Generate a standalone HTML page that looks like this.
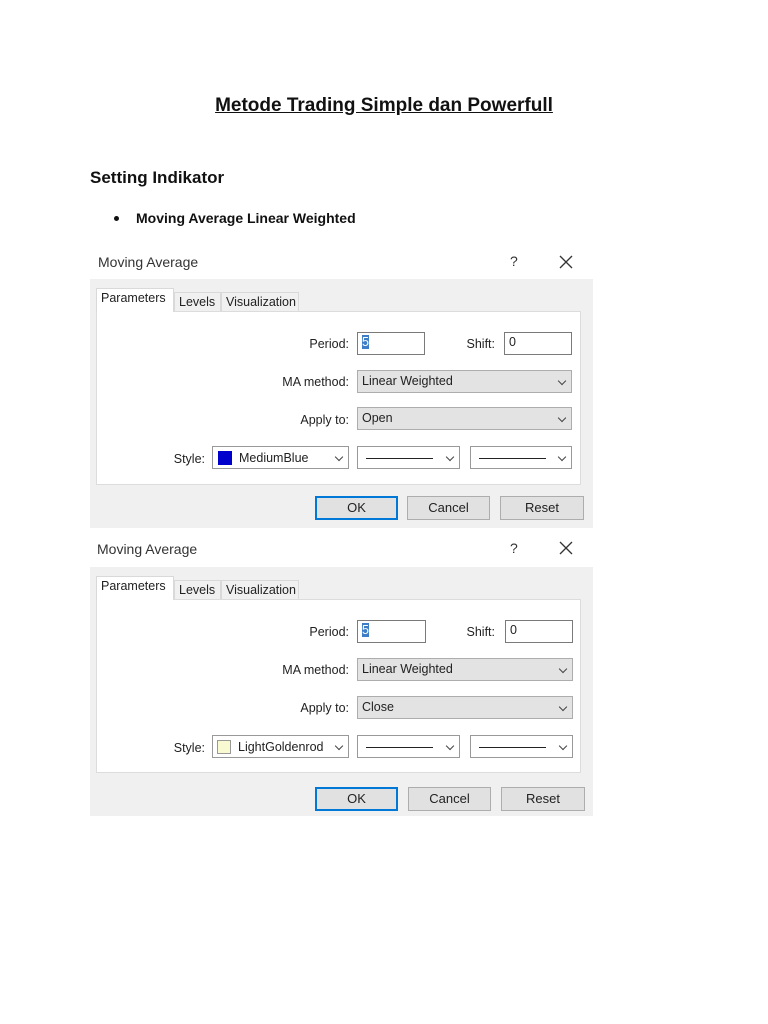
<!DOCTYPE html>
<html><head><meta charset="utf-8"><style>
body{margin:0;width:768px;height:1024px;background:#fff;position:relative;font-family:"Liberation Sans",sans-serif;overflow:hidden}
.a{position:absolute}
.h1{left:0;width:768px;text-align:center;top:95px;font-size:19px;font-weight:bold;text-decoration:underline;color:#111}
.h2{left:90px;top:168px;font-size:17px;font-weight:bold;color:#111}
.b{left:136px;top:210px;font-size:14px;font-weight:bold;color:#111}
.dot{left:114px;top:216px;width:5px;height:5px;border-radius:50%;background:#111}
.dlg{position:absolute;left:0;width:768px;height:290px;font-size:13px;color:#222}
.t{color:#333;font-size:14px}
.grey{left:90px;top:34px;width:503px;height:249px;background:#f0f0f0}
.panel{left:96px;top:66px;width:485px;height:174px;background:#fff;border:1px solid #dcdcdc;box-sizing:border-box}
.tab{top:47px;height:19px;background:#f0f0f0;border:1px solid #d9d9d9;border-bottom:none;box-sizing:border-box;font-size:12.5px;padding:2px 4px}
.inp{background:#fff;border:1px solid #7a7a7a;box-sizing:border-box;height:23px;padding:2px 4px;font-size:12.5px}
.sel{background:#e3e3e3;border:1px solid #adadad;box-sizing:border-box;height:23px;padding:3px 4px;font-size:12.5px}
.ws{background:#fff;border:1px solid #999;box-sizing:border-box;height:23px}
.lbl{font-size:12.5px;text-align:right}
.btn{top:251px;width:83px;height:24px;background:#e1e1e1;border:1px solid #adadad;box-sizing:border-box;text-align:center;line-height:22px;font-size:13px}
.chev{position:absolute;right:6px;top:7px;width:5px;height:5px;border-right:1px solid #444;border-bottom:1px solid #444;transform:rotate(45deg)}
.line{position:absolute;left:8px;top:11px;width:67px;height:1px;background:#222}
</style></head><body>
<div class="a h1">Metode Trading Simple dan Powerfull</div>
<div class="a h2">Setting Indikator</div>
<div class="a dot"></div>
<div class="a b">Moving Average Linear Weighted</div>

<div class="dlg" style="top:245px">
<div class="a t" style="left:98px;top:9px">Moving Average</div>
<div class="a t" style="left:510px;top:8px">?</div>
<svg class="a" style="left:559px;top:10px" width="14" height="14"><path d="M1 1L13 13M13 1L1 13" stroke="#333" stroke-width="1.3"/></svg>
<div class="a grey"></div>
<div class="a panel"></div>
<div class="a tab" style="left:96px;top:43px;width:78px;height:24px;background:#fff">Parameters</div>
<div class="a tab" style="left:174px;width:47px">Levels</div>
<div class="a tab" style="left:221px;width:78px">Visualization</div>
<div class="a lbl" style="left:280px;width:69px;top:92px">Period:</div>
<div class="a inp" style="left:357px;top:87px;width:68px"><span style="background:#3c7fc7;color:#fff">5</span></div>
<div class="a lbl" style="left:450px;width:45px;top:92px">Shift:</div>
<div class="a inp" style="left:504px;top:87px;width:68px">0</div>
<div class="a lbl" style="left:260px;width:89px;top:130px">MA method:</div>
<div class="a sel" style="left:357px;top:125px;width:215px">Linear Weighted<span class="chev"></span></div>
<div class="a lbl" style="left:260px;width:89px;top:168px">Apply to:</div>
<div class="a sel" style="left:357px;top:162px;width:215px">Open<span class="chev"></span></div>
<div class="a lbl" style="left:150px;width:55px;top:207px">Style:</div>
<div class="a ws" style="left:212px;top:201px;width:137px"><span style="position:absolute;left:5px;top:4px;width:14px;height:14px;background:#0000cd"></span><span style="position:absolute;left:26px;top:4px;font-size:12.5px">MediumBlue</span><span class="chev"></span></div>
<div class="a ws" style="left:357px;top:201px;width:103px"><span class="line"></span><span class="chev"></span></div>
<div class="a ws" style="left:470px;top:201px;width:102px"><span class="line"></span><span class="chev"></span></div>
<div class="a btn" style="left:315px;border:2px solid #0078d7;line-height:20px">OK</div>
<div class="a btn" style="left:407px">Cancel</div>
<div class="a btn" style="left:500px;width:84px">Reset</div>
</div>

<div class="dlg" style="top:533px">
<div class="a t" style="left:97px;top:8px">Moving Average</div>
<div class="a t" style="left:510px;top:7px">?</div>
<svg class="a" style="left:559px;top:8px" width="14" height="14"><path d="M1 1L13 13M13 1L1 13" stroke="#333" stroke-width="1.3"/></svg>
<div class="a grey"></div>
<div class="a panel"></div>
<div class="a tab" style="left:96px;top:43px;width:78px;height:24px;background:#fff">Parameters</div>
<div class="a tab" style="left:174px;width:47px">Levels</div>
<div class="a tab" style="left:221px;width:78px">Visualization</div>
<div class="a lbl" style="left:280px;width:69px;top:92px">Period:</div>
<div class="a inp" style="left:357px;top:87px;width:69px"><span style="background:#3c7fc7;color:#fff">5</span></div>
<div class="a lbl" style="left:450px;width:45px;top:92px">Shift:</div>
<div class="a inp" style="left:505px;top:87px;width:68px">0</div>
<div class="a lbl" style="left:260px;width:89px;top:130px">MA method:</div>
<div class="a sel" style="left:357px;top:125px;width:216px">Linear Weighted<span class="chev"></span></div>
<div class="a lbl" style="left:260px;width:89px;top:168px">Apply to:</div>
<div class="a sel" style="left:357px;top:163px;width:216px">Close<span class="chev"></span></div>
<div class="a lbl" style="left:150px;width:55px;top:208px">Style:</div>
<div class="a ws" style="left:212px;top:202px;width:137px"><span style="position:absolute;left:4px;top:4px;width:14px;height:14px;background:#fafad2;border:1px solid #999;box-sizing:border-box"></span><span style="position:absolute;left:25px;top:4px;font-size:12.5px">LightGoldenrod</span><span class="chev"></span></div>
<div class="a ws" style="left:357px;top:202px;width:103px"><span class="line"></span><span class="chev"></span></div>
<div class="a ws" style="left:470px;top:202px;width:103px"><span class="line"></span><span class="chev"></span></div>
<div class="a btn" style="left:315px;top:254px;border:2px solid #0078d7;line-height:20px">OK</div>
<div class="a btn" style="left:408px;top:254px">Cancel</div>
<div class="a btn" style="left:501px;top:254px;width:84px">Reset</div>
</div>
</body></html>
